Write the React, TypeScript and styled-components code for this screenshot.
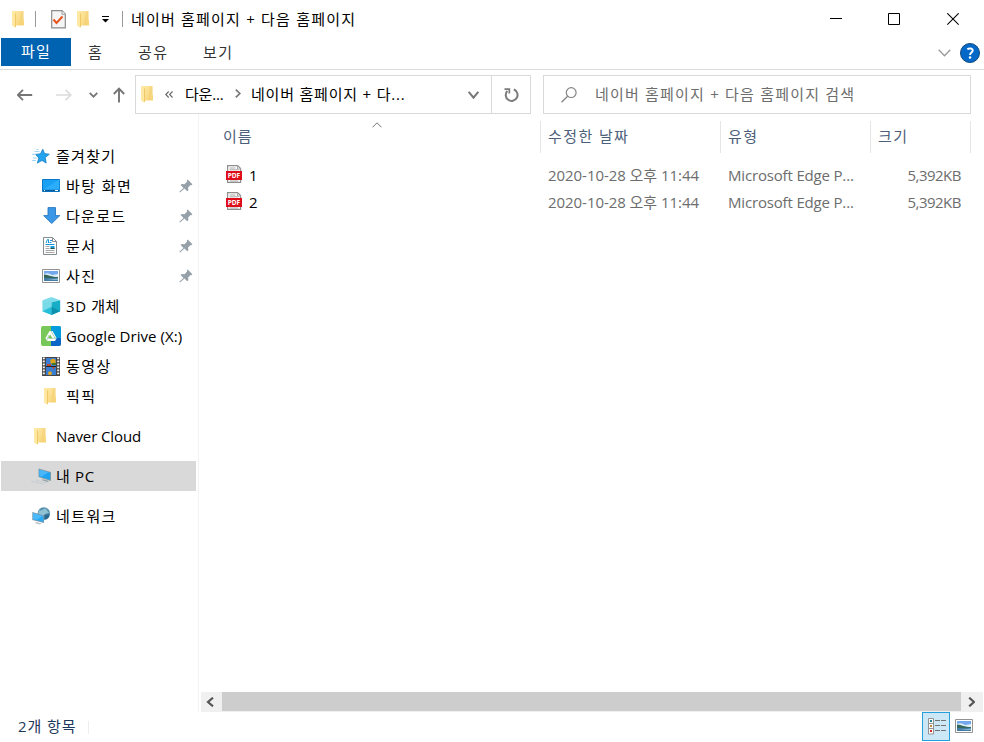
import React from 'react';
import styled, { createGlobalStyle } from 'styled-components';

const GlobalStyle = createGlobalStyle`
  * { box-sizing: border-box; }
  html, body { margin: 0; padding: 0; background: #fff; overflow: hidden; }
  body { font-family: 'Open Sans', 'Noto Sans CJK KR', sans-serif; font-size: 15px; color: #000; }
  svg { display: block; flex: none; }
`;

const Window = styled.div`
  width: 984px;
  height: 742px;
  display: flex;
  flex-direction: column;
  background: #fff;
`;

const Label = styled.span<{ $spacing?: number; $color?: string }>`
  white-space: pre;
  font-family: 'Open Sans', 'Noto Sans CJK KR', sans-serif;
  font-size: 15px;
  font-weight: 400;
  line-height: 22px;
  letter-spacing: ${(p) => p.$spacing ?? 0}px;
  color: ${(p) => p.$color ?? '#000'};
`;

const TitleBar = styled.header`
  display: grid;
  grid-template-columns: 39px 32px 27px 24px 9px 1fr auto;
  align-items: center;
  height: 38px;
`;

const TitleCell = styled.div<{ $left?: number }>`
  display: flex;
  align-items: center;
  padding-left: ${(p) => p.$left ?? 0}px;
`;

const Tick = styled.span<{ $left?: number; $height?: number; $color?: string }>`
  flex: none;
  width: 1px;
  height: ${(p) => p.$height ?? 16}px;
  margin-left: ${(p) => p.$left ?? 0}px;
  background: ${(p) => p.$color ?? '#999'};
`;

const Captions = styled.div`
  display: flex;
  gap: 46px;
  padding-right: 25px;
`;

const MinimizeSlot = styled.span`
  margin: 0 2px 0 -2px;
`;

const MaximizeSlot = styled.span`
  margin: 0 1px 0 -2px;
`;

const Ribbon = styled.nav`
  display: flex;
  height: 32px;
  padding-left: 1px;
  border-bottom: 1px solid #dadbdc;
`;

const FileTab = styled.div`
  width: 70px;
  height: 28px;
  padding: 2px 0 0 20px;
  background: #0063b1;
`;

const Tab = styled.div<{ $width: number }>`
  width: ${(p) => p.$width}px;
  padding: 3px 0 0 17px;
`;

const RibbonEnd = styled.div`
  display: flex;
  align-items: center;
  gap: 9px;
  margin-left: auto;
  padding-right: 4px;
  height: 30px;
`;

const NavBar = styled.div`
  display: flex;
  height: 44px;
  padding-top: 5px;
`;

const NavButtons = styled.div`
  display: grid;
  grid-template-columns: 39px 33px 24px 22px;
  align-items: center;
  width: 135px;
  height: 39px;
  padding-left: 17px;
`;

const Box = styled.div<{ $width: number }>`
  display: flex;
  align-items: center;
  width: ${(p) => p.$width}px;
  height: 39px;
  border: 1px solid #d9d9d9;
`;

const Path = styled.div`
  display: grid;
  grid-template-columns: 24px 20px 50px 16px 1fr 23px;
  align-items: center;
  width: 356px;
  height: 37px;
  padding-left: 5px;
  border-right: 1px solid #d9d9d9;

  & > ${Label} {
    padding-bottom: 2px;
  }
`;

const Refresh = styled.div`
  display: flex;
  flex: 1;
  justify-content: center;
  padding-left: 1px;
`;

const Search = styled(Box)`
  margin-left: 12px;
  padding-left: 17px;
  gap: 18px;

  & > ${Label} {
    padding-bottom: 2px;
  }
`;

const Main = styled.main`
  display: flex;
  height: 598px;
`;

const Sidebar = styled.aside`
  width: 199px;
  padding: 27px 2px 0 1px;
  border-right: 1px solid #f3f3f3;
`;

const TreeItem = styled.div<{ $level?: number; $gap?: boolean; $selected?: boolean }>`
  display: grid;
  grid-template-columns: 25px 1fr 14px;
  align-items: center;
  width: 195px;
  height: 30px;
  margin-top: ${(p) => (p.$gap ? 10 : 0)}px;
  padding-left: ${(p) => (p.$level ? 40 : 30)}px;
  padding-right: 3px;
  background: ${(p) => (p.$selected ? '#d9d9d9' : 'transparent')};
`;

const Content = styled.section`
  display: flex;
  flex-direction: column;
  width: 785px;
  padding: 0 1px 0 2px;
`;

const Columns = styled.div`
  display: grid;
  grid-template-columns: 340px 180px 150px 100px;
  height: 39px;
  padding-top: 7px;
`;

const Column = styled.div`
  display: flex;
  justify-content: space-between;
  height: 32px;
  padding: 4px 0 0 7px;
  border-right: 1px solid #e5e5e5;
`;

const NameColumn = styled(Column)`
  padding: 4px 158px 0 22px;
`;

const SortMark = styled.span`
  margin-top: -3px;
`;

const FileRow = styled.div`
  display: grid;
  grid-template-columns: 23px 299px 180px 150px 83px;
  align-items: center;
  height: 27px;
  padding-left: 25px;
`;

const Files = styled.div`
  flex: 1;
  padding-top: 8px;
`;

const IconLift = styled.span`
  padding-bottom: 2px;
`;

const SizeCell = styled.div`
  text-align: right;
`;

const ScrollBar = styled.div`
  display: grid;
  grid-template-columns: 21px 739px 22px;
  height: 20px;
  background: #f0f0f0;
`;

const ScrollThumb = styled.div`
  height: 19px;
  background: #cdcdcd;
`;

const ScrollArrow = styled.div`
  display: flex;
  align-items: center;
  padding-left: 5px;
  height: 19px;
`;

const StatusBar = styled.footer`
  display: flex;
  align-items: center;
  height: 30px;
  padding-left: 18px;

  & > ${Label} {
    padding-bottom: 2px;
  }
`;

const Views = styled.div`
  display: flex;
  align-items: center;
  gap: 5px;
  margin-left: auto;
  padding: 0 11px 2px 0;
`;

const ActiveView = styled.div`
  display: flex;
  align-items: center;
  justify-content: center;
  width: 28px;
  height: 29px;
  padding-left: 2px;
  background: #cce8f6;
  border: 1px solid #26a0da;
`;

const FolderIcon = () => (
  <svg width="13" height="17" viewBox="0 0 13 17">
    <defs>
      <linearGradient id="folderFace" x1="0" y1="0" x2="1" y2="1">
        <stop offset="0" stopColor="#ffe9a6" />
        <stop offset="1" stopColor="#f7d375" />
      </linearGradient>
    </defs>
    <path d="M1 0h10.500v8.500l.5.500v5.500H3z" fill="url(#folderFace)" />
    <path d="M9 0h2.500v8.500H10V14H7z" fill="#ecc666" opacity=".3" />
    <path d="M0 0h1l2.500 2V17L0 14.500z" fill="#ffe9a2" />
    <path d="M3.500 2.500V16" stroke="#efc967" fill="none" />
  </svg>
);

const CheckDocIcon = () => (
  <svg width="16" height="19" viewBox="0 0 16 19">
    <path d="M.7.700h10.300l3.300 3.300v13.800H.700z" fill="#f5f5f5" stroke="#8c8c8c" strokeWidth="1.200" />
    <path d="M11 1v3.300h3.300" fill="#fff" stroke="#9a9a9a" />
    <path d="M2.500 9.500l3 3.500L11.500 6.500" fill="none" stroke="#e8541e" strokeWidth="2" />
  </svg>
);

const CustomizeIcon = () => (
  <svg width="7" height="8" viewBox="0 0 7 8">
    <path d="M0 1.500h7" stroke="#000" />
    <path d="M0 4h7L3.500 7.500z" />
  </svg>
);

const MinimizeIcon = () => (
  <svg width="12" height="13" viewBox="0 0 12 13"><path d="M0 5.500h12" stroke="#000" /></svg>
);
const MaximizeIcon = () => (
  <svg width="12" height="13" viewBox="0 0 12 13"><path d="M.5.500h11v11H.500z" fill="none" stroke="#000" /></svg>
);
const CloseIcon = () => (
  <svg width="12" height="13" viewBox="0 0 12 13"><path d="M.3.300l11.400 11.400M11.700.300L.300 11.700" stroke="#000" strokeWidth="1.100" /></svg>
);

const Chevron = ({ w, h, color, stroke = 2 }: { w: number; h: number; color: string; stroke?: number }) => (
  <svg width={w} height={h} viewBox={`0 0 ${w} ${h}`}>
    <path d={`M.7 .8L${w / 2} ${h - 1.3}L${w - 0.7} .8`} fill="none" stroke={color} strokeWidth={stroke} />
  </svg>
);

const HelpIcon = () => (
  <svg width="20" height="20" viewBox="0 0 20 20">
    <circle cx="10" cy="10" r="9.500" fill="#0468c8" stroke="#124a7c" />
    <path d="M7.300 6.300C8.500 5.300 12.700 4.800 12.700 7.600c0 2-2.600 2-2.600 4.300" fill="none" stroke="#fff" strokeWidth="1.900" />
    <circle cx="10" cy="14.500" r="1.250" fill="#fff" />
  </svg>
);

const BackIcon = () => (
  <svg width="16" height="12" viewBox="0 0 16 12">
    <path d="M.5 6h14.700M6 .8L.8 6l5.200 5.200" fill="none" stroke="#757575" strokeWidth="1.800" />
  </svg>
);

const ForwardIcon = () => (
  <svg width="16" height="12" viewBox="0 0 16 12">
    <path d="M0 6h15M9.500 .8L14.800 6l-5.300 5.200" fill="none" stroke="#dcdcdc" strokeWidth="1.700" />
  </svg>
);

const UpIcon = () => (
  <svg width="12" height="17" viewBox="0 0 12 17">
    <path d="M6 2.500v14M.8 8L6 2.700 11.200 8" fill="none" stroke="#757575" strokeWidth="1.900" />
  </svg>
);

const BackCrumbsIcon = () => (
  <svg width="8" height="7" viewBox="0 0 8 7">
    <path d="M3.700 .5L.8 3.500l2.900 3M7.500 .5L4.600 3.500l2.900 3" fill="none" stroke="#666" strokeWidth="1.100" />
  </svg>
);

const CrumbIcon = () => (
  <svg width="6" height="11" viewBox="0 0 6 11">
    <path d="M.8 .7L4.800 4.500L.8 8.300" fill="none" stroke="#777" strokeWidth="1.700" />
  </svg>
);

const RefreshIcon = () => (
  <svg width="15" height="16" viewBox="0 0 15 16">
    <path d="M9.800 2.500A5.900 5.900 0 1 1 3.300 4" fill="none" stroke="#7b7b7b" strokeWidth="2" />
    <path d="M.5 1.200h5.700v5.200H4.500V3H.500z" fill="#7b7b7b" />
  </svg>
);

const SearchIcon = () => (
  <svg width="16" height="16" viewBox="0 0 16 16">
    <circle cx="10.200" cy="5.600" r="4.900" fill="none" stroke="#858585" strokeWidth="1.200" />
    <path d="M6.600 9.200L.5 15.300" stroke="#858585" strokeWidth="1.300" />
  </svg>
);

const StarIcon = () => (
  <svg width="19" height="17" viewBox="0 0 19 17">
    <path d="M10.800 1.200l1.700 4.400 4.800.6-4.100 3.400 1 5.500-4.200-2.700-4.700 2.700 1.600-5.200L3.500 6.400l5-.6z" fill="#24a4ee" stroke="#167ec2" strokeWidth=".8" />
    <path d="M2.500 3.500h5M0 6.300h4M4.500 1.500h2M1 10h4.500M0 12.500h4" stroke="#8accf2" strokeWidth=".8" />
  </svg>
);

const DesktopIcon = () => (
  <svg width="19" height="14" viewBox="0 0 19 14">
    <path d="M.5.500h17v12H.500z" fill="#18a0f5" stroke="#0878ca" />
    <path d="M1 11L16 1h1.500v10z" fill="#35b4ff" opacity=".65" />
    <path d="M1 11.500h16" stroke="#075c9d" strokeWidth="1.500" />
    <path d="M2 11.500h1M13 11.500h3" stroke="#fff" />
  </svg>
);

const DownloadIcon = () => (
  <svg width="20" height="18" viewBox="0 0 20 18">
    <path d="M7 .6h7.500v8h4.300L10.700 16.500 2.700 8.600H7z" fill="#3b98e6" stroke="#2678bf" strokeWidth=".9" />
  </svg>
);

const DocumentIcon = () => (
  <svg width="18" height="18" viewBox="0 0 18 18">
    <path d="M2.500.500h9l4 4v13h-13z" fill="#fff" stroke="#858b8e" />
    <path d="M11.500.500v4h4" fill="none" stroke="#858b8e" />
    <path d="M5 6l1.500-3.500h1V6M9 3.500h2M8.500 5.500h2M4.500 7.500h9" fill="none" stroke="#1795db" />
    <path d="M4.500 9.500h4M4.500 11.500h4M4.500 13.500h9M4.500 15.500h9" stroke="#a8a8a8" />
    <path d="M9.500 9h4v3h-4z" fill="#16a0e7" />
    <path d="M9.500 10.800h4v1.200h-4z" fill="#27594b" />
  </svg>
);

const PictureIcon = () => (
  <svg width="18" height="14" viewBox="0 0 18 14">
    <path d="M.5.500h17v13H.500z" fill="#fff" stroke="#929292" />
    <path d="M2 2h14v10H2z" fill="#73a8ee" />
    <path d="M2 5q4-2 8 1l6-1v4H2z" fill="#dcecf6" />
    <path d="M2 5.500C7 6 9 8 16 8v1.500H2z" fill="#35665b" />
    <path d="M2 9.200l14-.2v3H2z" fill="#437ca6" />
    <path d="M5 11l11-1.500V11z" fill="#86b6cd" />
  </svg>
);

const CubeIcon = () => (
  <svg width="19" height="18" viewBox="0 0 19 18">
    <path d="M.4 3.200L9.500 0l8.700 3.200L9.500 6z" fill="#7fdcea" />
    <path d="M.4 3.200L9.500 5.500V18L.4 14.300z" fill="#7adbe8" />
    <path d="M9.500 5.500l8.700-2.300v11.100L9.500 18z" fill="#16adc6" />
    <path d="M.4 14.300l9.100-4.500V18z" fill="#0fb5d4" opacity=".75" />
    <path d="M9.500 9.800l8.700 4.500L9.500 18z" fill="#0789a8" opacity=".8" />
  </svg>
);

const DriveIcon = () => (
  <svg width="20" height="20" viewBox="0 0 20 20">
    <rect width="20" height="20" rx="2" fill="#77c858" />
    <path d="M10 0h8a2 2 0 0 1 2 2v10H10z" fill="#049cdd" />
    <path d="M10 12h10v6a2 2 0 0 1-2 2h-8z" fill="#0c66c8" />
    <path d="M8.600 5h3l4 7.300-1.600 2.800H6l-1.600-2.800z" fill="#fff" />
    <path d="M9.200 8.500l2.200 3.800H7z" fill="#77c858" />
    <path d="M10.200 5l3.800 7.200h1.500M8 9L5.500 15M7.500 12.300h7" fill="none" stroke="#64a97b" strokeWidth=".5" />
  </svg>
);

const VideoIcon = () => (
  <svg width="18" height="19" viewBox="0 0 18 19">
    <path d="M0 0h18v19H0z" fill="#454545" />
    <path d="M1.800 .5v18M16.200 .5v18" stroke="#f4f4f4" strokeWidth="2" strokeDasharray="1.700 1.300" />
    <path d="M4 1h10v8H4zM4 10h10v8H4z" fill="#397ed2" />
    <circle cx="11" cy="4.500" r="2.700" fill="#dca41b" />
    <path d="M5 7h4v2H5zM10 10h3l-1.500 2.500z" fill="#c64725" />
    <path d="M10 6h4v2h-4z" fill="#467826" />
    <circle cx="8" cy="16.300" r="2" fill="#d9a52b" />
    <path d="M4 9.500h10" stroke="#222" />
  </svg>
);

const ComputerIcon = () => (
  <svg width="21" height="18" viewBox="0 0 21 18">
    <path d="M7.500 1.500l12.500 3.500v9L7.500 10z" fill="#8699a3" />
    <path d="M8.200 2.500l11 3.200v7.200l-11-3.500z" fill="#20a3f1" />
    <path d="M8.400 2.600l9 2.700-7 4.400-2-.6z" fill="#65c4ff" opacity=".6" />
    <path d="M12 12.200l6 1.800-1.500 1-6-1.900z" fill="#93a1a9" />
    <path d="M.5 14.300l12.500 3M5 13l10.500 3" stroke="#b8c2c8" strokeWidth=".8" strokeDasharray="2 1" />
  </svg>
);

const NetworkIcon = () => (
  <svg width="19" height="18" viewBox="0 0 19 18">
    <circle cx="11.800" cy="6.500" r="6.200" fill="#568fae" />
    <path d="M7 3c3 2 4-2 7-1l3 4c-3 0-5 1-6 4l-5-2z" fill="#9ed0dc" opacity=".8" />
    <path d="M12.500 8l5-1c0 4-2 5.500-5 5.700z" fill="#2b698f" />
    <path d="M.3 5l11.700 3.500v7.500L.3 13z" fill="#7898ac" />
    <path d="M1 6l10.300 3.200v5.500L1 12.200z" fill="#29aaf5" />
    <path d="M1 6l10 3.200-7 3.500-3-.7z" fill="#70caff" opacity=".5" />
    <path d="M4 15l6 1.500-2.500 1L3 16.300z" fill="#bcc5ca" />
  </svg>
);

const PinIcon = () => (
  <svg width="14" height="14" viewBox="0 0 14 14">
    <path d="M8.700 .5l4.700 4.700-1 1-.8-.3-2.500 2.600.3 2.700-1.200 1.100-2.700-2.700L1 13.500l-.7-.7L4.500 9 1.600 6.100 2.700 5l2.800.2L8.200 2.500 7.800 1.500z" fill="#95a0a8" />
  </svg>
);

const PdfGlyph = styled.text`
  font-family: 'Open Sans', sans-serif;
  font-size: 6.500px;
  font-weight: 700;
  fill: #fff;
`;

const PdfIcon = () => (
  <svg width="16" height="18" viewBox="0 0 16 18">
    <path d="M1.600.600h10l3 3v13.800h-13z" fill="#fff" stroke="#8e8e8e" strokeWidth="1.200" />
    <path d="M11.500.500v3.500h3.500M3.500 3h6M3.500 4.800h9M4 16h8" fill="none" stroke="#a8a8a8" />
    <path d="M0 6h16v9H0z" fill="#df0c19" />
    <PdfGlyph x="1.800" y="12.800" textLength="12.300">PDF</PdfGlyph>
  </svg>
);

const ScrollChevron = ({ right }: { right?: boolean }) => (
  <svg width="9" height="10" viewBox="0 0 9 10">
    <path d={right ? 'M3.200 .7L8 5 3.200 9.300' : 'M7 .7L2 5l5 4.300'} fill="none" stroke="#555" strokeWidth="2.200" />
  </svg>
);

const SortIcon = () => (
  <svg width="10" height="6" viewBox="0 0 10 6">
    <path d="M.5 5.300L5 .8l4.500 4.500" fill="none" stroke="#777" />
  </svg>
);

const DetailsIcon = () => (
  <svg width="19" height="17" viewBox="0 0 19 17">
    <path d="M.5.500h5v15.500h-5zM.5 5.500h5M.5 10.500h5" fill="#fff" stroke="#929292" />
    <path d="M2 2h2v2H2z" fill="#257f8c" />
    <path d="M2 7h2v2H2z" fill="#bd8840" />
    <path d="M2 12h2v2H2z" fill="#ce3025" />
    <path d="M7 2.500h5M13 2.500h5M7 7.500h5M13 7.500h5M7 12.500h5M13 12.500h5" stroke="#727272" />
  </svg>
);

type Entry = {
  label: string;
  icon: React.ReactNode;
  indent?: number;
  level?: number;
  pinned?: boolean;
  gap?: boolean;
  selected?: boolean;
  spacing?: number;
};

const IconSlot = styled.span<{ $indent?: number }>`
  padding-left: ${(p) => p.$indent ?? 0}px;
`;

const tree: Entry[] = [
  { label: '즐겨찾기', icon: <StarIcon />, indent: 1, spacing: 1.3 },
  { label: '바탕 화면', icon: <DesktopIcon />, indent: 1, level: 1, pinned: true, spacing: 1.4 },
  { label: '다운로드', icon: <DownloadIcon />, level: 1, pinned: true, spacing: 1.3 },
  { label: '문서', icon: <DocumentIcon />, level: 1, pinned: true, spacing: 1.5 },
  { label: '사진', icon: <PictureIcon />, indent: 1, level: 1, pinned: true, spacing: 1.5 },
  { label: '3D 개체', icon: <CubeIcon />, indent: 1, level: 1, spacing: 0.6 },
  { label: 'Google Drive (X:)', icon: <DriveIcon />, level: 1, spacing: 0.05 },
  { label: '동영상', icon: <VideoIcon />, indent: 1, level: 1, spacing: 1.5 },
  { label: '픽픽', icon: <FolderIcon />, indent: 3, level: 1, spacing: 1.5 },
  { label: 'Naver Cloud', icon: <FolderIcon />, indent: 3, gap: true, spacing: -0.1 },
  { label: '내 PC', icon: <ComputerIcon />, gap: true, selected: true, spacing: 0.7 },
  { label: '네트워크', icon: <NetworkIcon />, indent: 1, gap: true, spacing: 1.4 },
];

const files = ['1', '2'];

export default function App() {
  return (
    <Window>
      <GlobalStyle />
      <TitleBar>
        <TitleCell $left={12}><FolderIcon /><Tick $left={10} /></TitleCell>
        <TitleCell $left={12}><CheckDocIcon /></TitleCell>
        <TitleCell $left={6}><FolderIcon /></TitleCell>
        <TitleCell $left={4}><CustomizeIcon /></TitleCell>
        <Tick />
        <Label $spacing={1.2}>네이버 홈페이지 + 다음 홈페이지</Label>
        <Captions>
          <MinimizeSlot><MinimizeIcon /></MinimizeSlot>
          <MaximizeSlot><MaximizeIcon /></MaximizeSlot>
          <CloseIcon />
        </Captions>
      </TitleBar>
      <Ribbon>
        <FileTab><Label $color="#fff" $spacing={1.2}>파일</Label></FileTab>
        <Tab $width={50}><Label $color="#333" $spacing={1}>홈</Label></Tab>
        <Tab $width={65}><Label $color="#333" $spacing={1.5}>공유</Label></Tab>
        <Tab $width={65}><Label $color="#333" $spacing={1.5}>보기</Label></Tab>
        <RibbonEnd><Chevron w={13} h={8} color="#9a9a9a" stroke={1.3} /><HelpIcon /></RibbonEnd>
      </Ribbon>
      <NavBar>
        <NavButtons>
          <BackIcon />
          <ForwardIcon />
          <Chevron w={9} h={6} color="#757575" stroke={1.7} />
          <UpIcon />
        </NavButtons>
        <Box $width={396}>
          <Path>
            <FolderIcon />
            <BackCrumbsIcon />
            <Label $spacing={-0.2}>다운...</Label>
            <CrumbIcon />
            <Label $spacing={0.8}>네이버 홈페이지 + 다...</Label>
            <Chevron w={11} h={8} color="#757575" />
          </Path>
          <Refresh><RefreshIcon /></Refresh>
        </Box>
        <Search $width={428}>
          <SearchIcon />
          <Label $spacing={1.2} $color="#6d6d6d">네이버 홈페이지 + 다음 홈페이지 검색</Label>
        </Search>
      </NavBar>
      <Main>
        <Sidebar>
          {tree.map((e) => (
            <TreeItem key={e.label} $level={e.level} $gap={e.gap} $selected={e.selected}>
              <IconSlot $indent={e.indent}>{e.icon}</IconSlot>
              <Label $spacing={e.spacing}>{e.label}</Label>
              {e.pinned && <PinIcon />}
            </TreeItem>
          ))}
        </Sidebar>
        <Content>
          <Columns>
            <NameColumn>
              <Label $color="#4c607a" $spacing={1}>이름</Label>
              <SortMark><SortIcon /></SortMark>
            </NameColumn>
            <Column><Label $color="#4c607a" $spacing={1.4}>수정한 날짜</Label></Column>
            <Column><Label $color="#4c607a" $spacing={1.5}>유형</Label></Column>
            <Column><Label $color="#4c607a" $spacing={1.5}>크기</Label></Column>
          </Columns>
          <Files>
            {files.map((f) => (
              <FileRow key={f}>
                <IconLift><PdfIcon /></IconLift>
                <Label>{f}</Label>
                <Label $color="#6d6d6d" $spacing={-0.05}>2020-10-28 오후 11:44</Label>
                <Label $color="#6d6d6d" $spacing={-0.17}>Microsoft Edge P...</Label>
                <SizeCell><Label $color="#6d6d6d" $spacing={-0.5}>5,392KB</Label></SizeCell>
              </FileRow>
            ))}
          </Files>
          <ScrollBar>
            <ScrollArrow><ScrollChevron /></ScrollArrow>
            <ScrollThumb />
            <ScrollArrow><ScrollChevron right /></ScrollArrow>
          </ScrollBar>
        </Content>
      </Main>
      <StatusBar>
        <Label $color="#1e395b" $spacing={0.9}>2개 항목</Label>
        <Tick $left={12} $height={13} $color="#eee" />
        <Views>
          <ActiveView><DetailsIcon /></ActiveView>
          <PictureIcon />
        </Views>
      </StatusBar>
    </Window>
  );
}
